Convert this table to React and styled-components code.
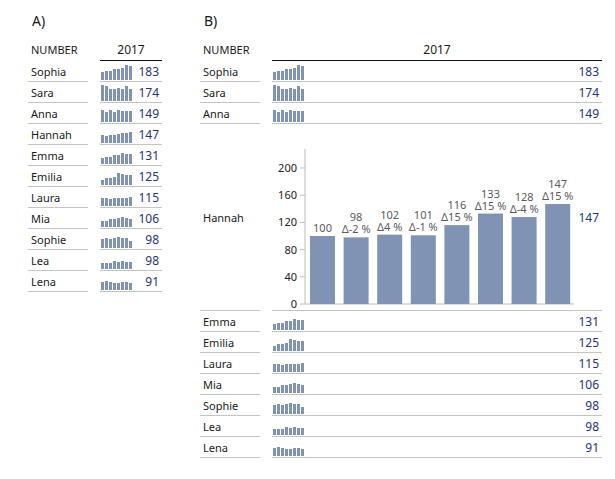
import React from 'react';
import styled, { createGlobalStyle } from 'styled-components';

const GlobalStyle = createGlobalStyle`
  body {
    margin: 0;
    background: #ffffff;
    font-family: "Noto Sans", "Open Sans", sans-serif;
    color: #1a1a1a;
  }
`;

const Page = styled.div`
  display: flex;
  gap: 38px;
  padding: 12px 0 0 28px;
  width: 615px;
  height: 479px;
  box-sizing: border-box;
`;

const Panel = styled.section`
  display: flex;
  flex-direction: column;
`;

const PanelTitle = styled.div`
  font-size: 14px;
  line-height: 18px;
  padding-left: 4px;
  margin-bottom: 10px;
`;

const Table = styled.div`
  display: grid;
  grid-template-columns: 60px ${p => p.$valueWidth}px;
  column-gap: 12px;
`;

const HeadName = styled.div`
  height: 20px;
  line-height: 20px;
  font-size: 11px;
  padding-left: 3px;
  border-bottom: 1px solid transparent;
`;

const HeadYear = styled.div`
  height: 20px;
  line-height: 20px;
  font-size: 12px;
  text-align: center;
  border-bottom: 1px solid #111;
`;

const NameCell = styled.div`
  height: ${p => (p.$tall ? 186 : 20)}px;
  display: flex;
  align-items: center;
  font-size: 11px;
  padding-left: 3px;
  border-bottom: 1px solid #c4c4c4;
`;

const ValueCell = styled.div`
  height: ${p => (p.$tall ? 186 : 20)}px;
  display: flex;
  align-items: center;
  justify-content: space-between;
  padding: 0 3px 0 1px;
  border-bottom: 1px solid #c4c4c4;
`;

const Spark = styled.div`
  align-self: flex-end;
  display: flex;
  align-items: flex-end;
  gap: 1px;
  height: 19px;
  margin-bottom: 1px;
`;

const SparkBar = styled.div`
  width: 3px;
  background: #8093b4;
`;

const Value = styled.span`
  font-size: 12px;
  color: #1f3479;
`;

const ChartSvg = styled.svg`
  display: block;
  align-self: flex-start;
  font-family: "Noto Sans", "Open Sans", sans-serif;
`;

// spark = bar heights in px, chart = monthly values for the expanded row
const rows = [
  { name: 'Sophia', value: 183, spark: [8, 9, 9, 11, 11, 12, 15, 14] },
  { name: 'Sara', value: 174, spark: [16, 15, 12, 12, 13, 12, 15, 12] },
  { name: 'Anna', value: 149, spark: [12, 10, 12, 10, 12, 11, 11, 11] },
  { name: 'Hannah', value: 147, spark: [8, 7, 8, 8, 9, 10, 10, 11], chart: [100, 98, 102, 101, 116, 133, 128, 147] },
  { name: 'Emma', value: 131, spark: [6, 7, 7, 9, 9, 11, 10, 10] },
  { name: 'Emilia', value: 125, spark: [5, 7, 7, 8, 12, 11, 10, 10] },
  { name: 'Laura', value: 115, spark: [8, 8, 7, 8, 8, 8, 8, 9] },
  { name: 'Mia', value: 106, spark: [6, 6, 8, 8, 9, 10, 9, 8] },
  { name: 'Sophie', value: 98, spark: [9, 10, 9, 10, 11, 10, 10, 7] },
  { name: 'Lea', value: 98, spark: [6, 6, 6, 8, 7, 8, 7, 7] },
  { name: 'Lena', value: 91, spark: [8, 9, 8, 7, 7, 8, 8, 7] },
];

const Sparkline = ({ data }) => (
  <Spark>
    {data.map((h, i) => (
      <SparkBar key={i} style={{ height: h }} />
    ))}
  </Spark>
);

const BarChart = ({ data }) => {
  const base = 180;
  const k = 0.68;
  const ticks = [0, 40, 80, 120, 160, 200];
  return (
    <ChartSvg width="304" height="186">
      <line x1="32" y1="25" x2="32" y2={base} stroke="#bdbdbd" />
      <line x1="32" y1={base} x2="301" y2={base} stroke="#bdbdbd" />
      {ticks.map(t => {
        const y = base - t * k;
        return (
          <g key={t}>
            <line x1="27" y1={y} x2="32" y2={y} stroke="#bdbdbd" />
            <text x="24" y={y + 4} fontSize="11" textAnchor="end" fill="#222">{t}</text>
          </g>
        );
      })}
      {data.map((v, i) => {
        const x = 37 + i * 33.6;
        const top = base - v * k;
        const prev = i > 0 ? data[i - 1] : null;
        const delta = prev ? Math.round(((v - prev) / prev) * 100) : null;
        return (
          <g key={i}>
            <rect x={x} y={top} width="25" height={v * k} fill="#8093b4" />
            {prev === null ? (
              <text x={x + 12.5} y={top - 4} fontSize="11" textAnchor="middle" fill="#5a5a5a">{v}</text>
            ) : (
              <>
                <text x={x + 12.5} y={top - 16} fontSize="11" textAnchor="middle" fill="#5a5a5a">{v}</text>
                <text x={x + 12.5} y={top - 4} fontSize="11" textAnchor="middle" fill="#5a5a5a">{`Δ${delta} %`}</text>
              </>
            )}
          </g>
        );
      })}
    </ChartSvg>
  );
};

const TablePanel = ({ title, valueWidth, expand }) => (
  <Panel>
    <PanelTitle>{title}</PanelTitle>
    <Table $valueWidth={valueWidth}>
      <HeadName>NUMBER</HeadName>
      <HeadYear>2017</HeadYear>
      {rows.map(r => {
        const tall = expand && !!r.chart;
        return (
          <React.Fragment key={r.name}>
            <NameCell $tall={tall}>{r.name}</NameCell>
            <ValueCell $tall={tall}>
              {tall ? <BarChart data={r.chart} /> : <Sparkline data={r.spark} />}
              <Value>{r.value}</Value>
            </ValueCell>
          </React.Fragment>
        );
      })}
    </Table>
  </Panel>
);

export default function App() {
  return (
    <>
      <GlobalStyle />
      <Page>
        <TablePanel title="A)" valueWidth={62} />
        <TablePanel title="B)" valueWidth={330} expand />
      </Page>
    </>
  );
}
